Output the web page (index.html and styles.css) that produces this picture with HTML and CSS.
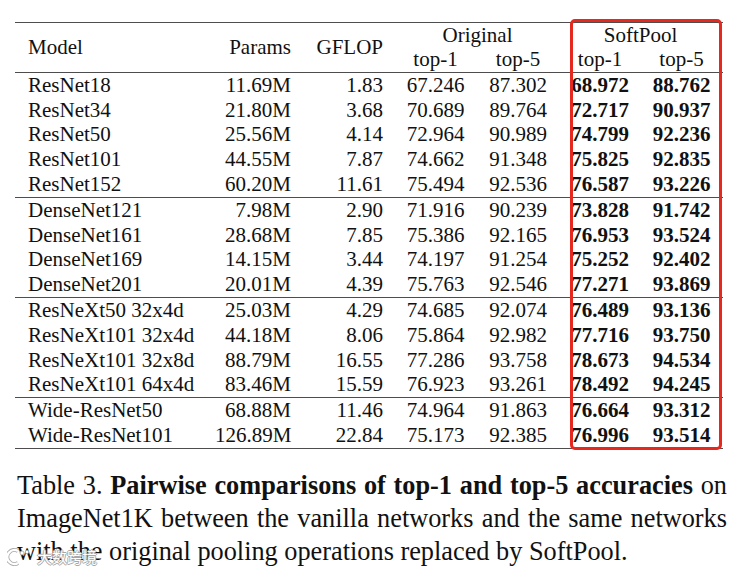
FILE: index.html
```html
<!DOCTYPE html>
<html>
<head>
<meta charset="utf-8">
<link rel="stylesheet" href="styles.css">
</head>
<body>
<div class="page">
  <div class="table-wrap">
    <table class="results">
      <colgroup>
        <col class="c-model"><col class="c-params"><col class="c-gflop">
        <col class="c-o1"><col class="c-o5"><col class="c-s1"><col class="c-s5">
      </colgroup>
      <thead>
        <tr class="h1">
          <th rowspan="2" class="model">Model</th>
          <th rowspan="2" class="num">Params</th>
          <th rowspan="2" class="num">GFLOP</th>
          <th colspan="2" class="grp grp-orig">Original</th>
          <th colspan="2" class="grp grp-soft">SoftPool</th>
        </tr>
        <tr class="h2">
          <th class="ctr">top-1</th><th class="ctr">top-5</th>
          <th class="ctr">top-1</th><th class="ctr last">top-5</th>
        </tr>
      </thead>
      <tbody>
        <tr><td class="model">ResNet18</td><td class="num">11.69M</td><td class="num">1.83</td><td class="ctr">67.246</td><td class="ctr">87.302</td><td class="ctr b">68.972</td><td class="ctr b last">88.762</td></tr>
        <tr><td class="model">ResNet34</td><td class="num">21.80M</td><td class="num">3.68</td><td class="ctr">70.689</td><td class="ctr">89.764</td><td class="ctr b">72.717</td><td class="ctr b last">90.937</td></tr>
        <tr><td class="model">ResNet50</td><td class="num">25.56M</td><td class="num">4.14</td><td class="ctr">72.964</td><td class="ctr">90.989</td><td class="ctr b">74.799</td><td class="ctr b last">92.236</td></tr>
        <tr><td class="model">ResNet101</td><td class="num">44.55M</td><td class="num">7.87</td><td class="ctr">74.662</td><td class="ctr">91.348</td><td class="ctr b">75.825</td><td class="ctr b last">92.835</td></tr>
        <tr><td class="model">ResNet152</td><td class="num">60.20M</td><td class="num">11.61</td><td class="ctr">75.494</td><td class="ctr">92.536</td><td class="ctr b">76.587</td><td class="ctr b last">93.226</td></tr>
      </tbody>
      <tbody>
        <tr><td class="model">DenseNet121</td><td class="num">7.98M</td><td class="num">2.90</td><td class="ctr">71.916</td><td class="ctr">90.239</td><td class="ctr b">73.828</td><td class="ctr b last">91.742</td></tr>
        <tr><td class="model">DenseNet161</td><td class="num">28.68M</td><td class="num">7.85</td><td class="ctr">75.386</td><td class="ctr">92.165</td><td class="ctr b">76.953</td><td class="ctr b last">93.524</td></tr>
        <tr><td class="model">DenseNet169</td><td class="num">14.15M</td><td class="num">3.44</td><td class="ctr">74.197</td><td class="ctr">91.254</td><td class="ctr b">75.252</td><td class="ctr b last">92.402</td></tr>
        <tr><td class="model">DenseNet201</td><td class="num">20.01M</td><td class="num">4.39</td><td class="ctr">75.763</td><td class="ctr">92.546</td><td class="ctr b">77.271</td><td class="ctr b last">93.869</td></tr>
      </tbody>
      <tbody>
        <tr><td class="model">ResNeXt50 32x4d</td><td class="num">25.03M</td><td class="num">4.29</td><td class="ctr">74.685</td><td class="ctr">92.074</td><td class="ctr b">76.489</td><td class="ctr b last">93.136</td></tr>
        <tr><td class="model">ResNeXt101 32x4d</td><td class="num">44.18M</td><td class="num">8.06</td><td class="ctr">75.864</td><td class="ctr">92.982</td><td class="ctr b">77.716</td><td class="ctr b last">93.750</td></tr>
        <tr><td class="model">ResNeXt101 32x8d</td><td class="num">88.79M</td><td class="num">16.55</td><td class="ctr">77.286</td><td class="ctr">93.758</td><td class="ctr b">78.673</td><td class="ctr b last">94.534</td></tr>
        <tr><td class="model">ResNeXt101 64x4d</td><td class="num">83.46M</td><td class="num">15.59</td><td class="ctr">76.923</td><td class="ctr">93.261</td><td class="ctr b">78.492</td><td class="ctr b last">94.245</td></tr>
      </tbody>
      <tbody>
        <tr><td class="model">Wide-ResNet50</td><td class="num">68.88M</td><td class="num">11.46</td><td class="ctr">74.964</td><td class="ctr">91.863</td><td class="ctr b">76.664</td><td class="ctr b last">93.312</td></tr>
        <tr><td class="model">Wide-ResNet101</td><td class="num">126.89M</td><td class="num">22.84</td><td class="ctr">75.173</td><td class="ctr">92.385</td><td class="ctr b">76.996</td><td class="ctr b last">93.514</td></tr>
      </tbody>
    </table>
    <div class="highlight"></div>
  </div>
  <p class="caption">Table 3. <b>Pairwise comparisons of top-1 and top-5 accuracies</b> on ImageNet1K between the vanilla networks and the same networks with the original pooling operations replaced by SoftPool.</p>
  <div class="watermark">
    <svg class="wm-logo" width="24" height="18" viewBox="0 0 24 18">
      <path d="M11 3 A7 7 0 1 0 11 15" fill="none" stroke="#a8a8a8" stroke-width="4"/>
      <path d="M11 3 A7 7 0 1 0 11 15" fill="none" stroke="#ffffff" stroke-width="2.4"/>
      <circle cx="15" cy="5" r="2" fill="#fff" stroke="#a8a8a8" stroke-width="0.8"/>
      <circle cx="20" cy="4" r="1.7" fill="#fff" stroke="#a8a8a8" stroke-width="0.8"/>
    </svg>
    <span class="wm-text">大数跨境</span>
  </div>
</div>
</body>
</html>
```

FILE: styles.css
```css
html, body {
  margin: 0;
  padding: 0;
  background: #ffffff;
}

.page {
  position: relative;
  width: 747px;
  height: 579px;
  overflow: hidden;
  font-family: "Liberation Serif", "Times New Roman", serif;
  color: #111111;
}

.table-wrap {
  position: relative;
  margin: 22px 0 0 15px;
  width: 708px;
}

.results {
  width: 708px;
  table-layout: fixed;
  border-collapse: collapse;
  font-size: 21px;
  border-top: 1.5px solid #4d4d4d;
  border-bottom: 1.5px solid #4d4d4d;
}

.c-model { width: 200px; }
.c-params { width: 82px; }
.c-gflop { width: 92px; }
.c-o1 { width: 93px; }
.c-o5 { width: 72px; }
.c-s1 { width: 92px; }
.c-s5 { width: 77px; }

.results th,
.results td {
  padding: 0;
  font-weight: normal;
  line-height: 24.8px;
  height: 24.8px;
  white-space: nowrap;
}

.results thead {
  border-bottom: 1.5px solid #4d4d4d;
}

.results tbody + tbody {
  border-top: 1.5px solid #4d4d4d;
}

.results .h1 th { line-height: 24px; height: 24px; }

.results th.model,
.results td.model {
  text-align: left;
  padding-left: 13px;
}

.results .num {
  text-align: right;
  padding-right: 6px;
}

.results .ctr {
  text-align: center;
}

.results .last {
  padding-right: 6px;
}

.results .grp-orig {
  text-align: center;
  padding-left: 12px;
}

.results .grp-soft {
  text-align: center;
  padding-left: 4px;
}

.results td.b {
  font-weight: bold;
}

.highlight {
  position: absolute;
  left: 555px;
  top: -3px;
  width: 146px;
  height: 425px;
  border: 3px solid #e6291f;
  border-radius: 5px;
  pointer-events: none;
}

.caption {
  margin: 20px 20px 0 17px;
  font-size: 26.3px;
  line-height: 33px;
  text-align: justify;
  color: #111111;
}

.caption b {
  font-weight: bold;
}

.watermark {
  position: absolute;
  left: 7px;
  top: 548px;
  display: flex;
  align-items: center;
  gap: 6px;
}

.wm-text {
  font-family: "Noto Sans CJK SC", sans-serif;
  font-size: 15px;
  line-height: 18px;
  color: #ffffff;
  text-shadow: 1px 0 0 #a8a8a8, -1px 0 0 #a8a8a8, 0 1px 0 #a8a8a8, 0 -1px 0 #a8a8a8;
}
```
